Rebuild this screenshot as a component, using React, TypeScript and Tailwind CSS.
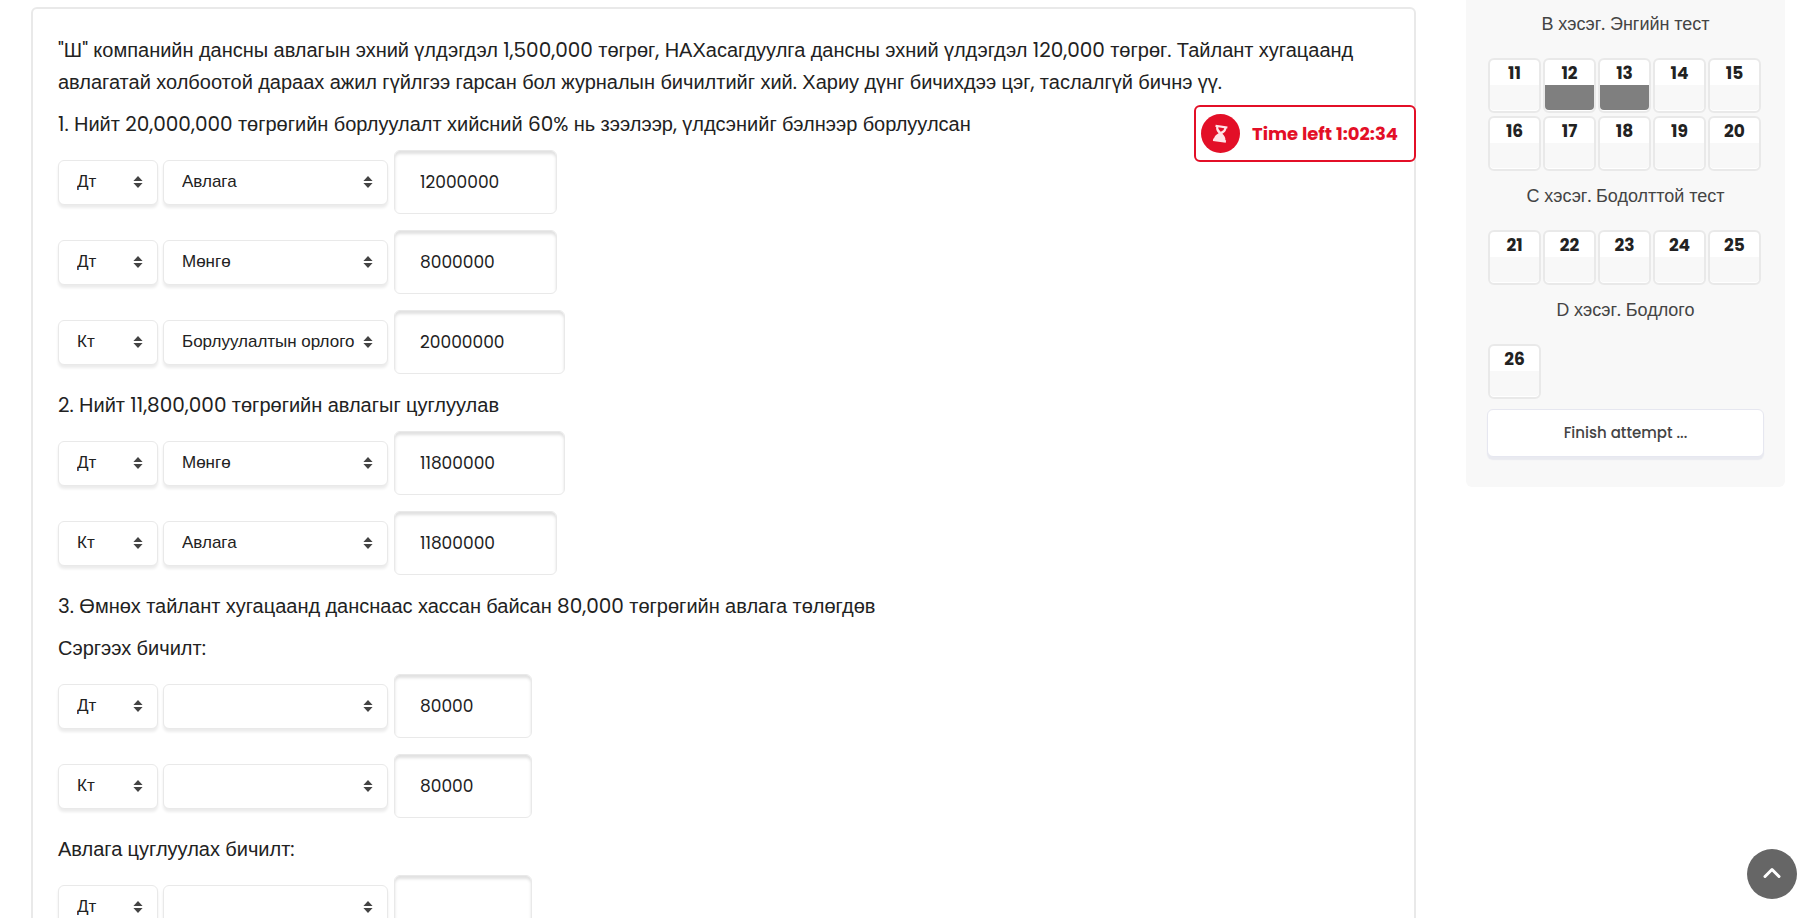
type Entry = { side: "Дт" | "Кт"; account: string; amount: string; width: string };
type Block = { paragraphs: string[]; entries: Entry[] };

const NARROW = "w-[138px]";
const MEDIUM = "w-[163px]";
const WIDE = "w-[171px]";

const accounts = ["", "Авлага", "Мөнгө", "Борлуулалтын орлого"];

const blocks: Block[] = [
  {
    paragraphs: [
      '"Ш" компанийн дансны авлагын эхний үлдэгдэл 1,500,000 төгрөг, НАХасагдуулга дансны эхний үлдэгдэл 120,000 төгрөг. Тайлант хугацаанд авлагатай холбоотой дараах ажил гүйлгээ гарсан бол журналын бичилтийг хий. Хариу дүнг бичихдээ цэг, таслалгүй бичнэ үү.',
      "1. Нийт 20,000,000 төгрөгийн борлуулалт хийсний 60% нь зээлээр, үлдсэнийг бэлнээр борлуулсан",
    ],
    entries: [
      { side: "Дт", account: "Авлага", amount: "12000000", width: MEDIUM },
      { side: "Дт", account: "Мөнгө", amount: "8000000", width: MEDIUM },
      { side: "Кт", account: "Борлуулалтын орлого", amount: "20000000", width: WIDE },
    ],
  },
  {
    paragraphs: ["2. Нийт 11,800,000 төгрөгийн авлагыг цуглуулав"],
    entries: [
      { side: "Дт", account: "Мөнгө", amount: "11800000", width: WIDE },
      { side: "Кт", account: "Авлага", amount: "11800000", width: MEDIUM },
    ],
  },
  {
    paragraphs: [
      "3. Өмнөх тайлант хугацаанд данснаас хассан байсан 80,000 төгрөгийн авлага төлөгдөв",
      "Сэргээх бичилт:",
    ],
    entries: [
      { side: "Дт", account: "", amount: "80000", width: NARROW },
      { side: "Кт", account: "", amount: "80000", width: NARROW },
    ],
  },
  {
    paragraphs: ["Авлага цуглуулах бичилт:"],
    entries: [
      { side: "Дт", account: "", amount: "", width: NARROW },
      { side: "Кт", account: "", amount: "", width: NARROW },
    ],
  },
];

const sections = [
  { title: "В хэсэг. Энгийн тест", questions: [11, 12, 13, 14, 15, 16, 17, 18, 19, 20] },
  { title: "С хэсэг. Бодолттой тест", questions: [21, 22, 23, 24, 25] },
  { title: "D хэсэг. Бодлого", questions: [26] },
];
const answered = [12, 13];

function Picker({ label, value, options, width }: { label: string; value: string; options: string[]; width: string }) {
  return (
    <div className={`relative ${width}`}>
      <select
        aria-label={label}
        defaultValue={value}
        className="block h-[45px] w-full appearance-none rounded-md border border-[#e9e9e9] bg-white pr-6 pl-[18px] text-[17px] text-[#222] shadow-[0_3px_3px_rgba(0,0,0,0.08)]"
      >
        {options.map((o) => (
          <option key={o} value={o}>
            {o}
          </option>
        ))}
      </select>
      <svg
        viewBox="0 0 10 12"
        className="pointer-events-none absolute top-4 right-[15px] h-3 w-2.5 fill-[#444]"
        aria-hidden="true"
      >
        <path d="M5 0 9.6 5H.4ZM5 12 .4 7h9.2Z" />
      </svg>
    </div>
  );
}

function EntryRow({ entry, index }: { entry: Entry; index: string }) {
  return (
    <div className="flex items-center">
      <Picker label={`Тал ${index}`} value={entry.side} options={["Дт", "Кт"]} width="w-[100px]" />
      <div className="ml-[5px]">
        <Picker label={`Данс ${index}`} value={entry.account} options={accounts} width="w-[225px]" />
      </div>
      <input
        type="text"
        aria-label={`Дүн ${index}`}
        defaultValue={entry.amount}
        className={`ml-1.5 h-16 rounded-md border border-[#e9e9e9] bg-white px-[25px] text-[17px] text-[#222] shadow-[inset_0_3px_3px_rgba(0,0,0,0.12)] ${entry.width}`}
      />
    </div>
  );
}

function Hourglass() {
  return (
    <svg viewBox="0 0 39 39" className="size-[39px] shrink-0" aria-hidden="true">
      <circle cx="19.5" cy="19.5" r="19.5" fill="#e30f27" />
      <g transform="rotate(8 19.5 19.5)">
        <path
          d="M13.5 11.500h12v2.200h-.8c0 2.800-1.400 4.300-3.300 5.800 1.900 1.400 3.600 2.900 3.900 5.900h.7V28h-13v-2.600h.7c.3-3 2-4.500 3.900-5.900-1.900-1.500-3.300-3-3.300-5.800h-.8Z"
          fill="#ffe3e6"
        />
        <path d="M16.500 13.700h6c0 1.600-1.200 2.800-3 4-1.800-1.200-3-2.400-3-4Z" fill="#e30f27" />
      </g>
    </svg>
  );
}

export default function App() {
  return (
    <div className="h-screen overflow-y-auto bg-white font-[Poppins,'Liberation_Sans',sans-serif] text-[#222] [scrollbar-width:none]">
      <div className="flex items-start pr-8 pl-[31px]">
        <main className="relative mt-[7px] min-w-0 flex-1 rounded-md border-2 border-[#e9e9e9] p-[25px]">
          {blocks.map((block, b) => (
            <section key={b} className="mb-[15px]">
              {block.paragraphs.map((p) => (
                <p key={p} className="mb-2.5 text-[20px] leading-8">
                  {p}
                </p>
              ))}
              <div className="flex flex-col gap-4">
                {block.entries.map((e, i) => (
                  <EntryRow key={i} entry={e} index={`${b + 1}.${i + 1}`} />
                ))}
              </div>
            </section>
          ))}
          <div
            role="timer"
            className="absolute top-24 -right-0.5 flex h-[57px] items-center gap-3 rounded-md border-2 border-[#e30f27] bg-white pr-4 pl-[5px] text-[18px] font-bold text-[#e30f27]"
          >
            <Hourglass />
            Time left 1:02:34
          </div>
        </main>

        <aside className="ml-[50px] w-[319px] shrink-0 rounded-b-md bg-[#f8f8f8] px-[21px] pt-[9px] pb-[30px]">
          <nav aria-label="Quiz navigation">
            {sections.map((s) => (
              <section key={s.title} className="pb-2.5">
                <h3 className="text-center text-[18px] leading-[30px] text-[#444]">{s.title}</h3>
                <div className="mt-[19px] flex flex-wrap gap-x-0.5 gap-y-[3px] pl-px">
                  {s.questions.map((q) => (
                    <a
                      key={q}
                      href={`#question-${q}`}
                      className="flex h-[55px] w-[53px] flex-col rounded-md border-2 border-[#e9e9e9] bg-white text-center text-[17px] leading-[27px] font-bold"
                    >
                      <span className="h-[25px]">{q}</span>
                      <span
                        className={
                          answered.includes(q) ? "h-[25px] rounded-b bg-[#7f7f7f]" : "h-[25px] rounded-b bg-[#f8f8f8]"
                        }
                      />
                    </a>
                  ))}
                </div>
              </section>
            ))}
          </nav>
          <button
            type="button"
            className="block h-12 w-full rounded-md border border-[#e6e7f0] bg-white text-[15px] font-medium text-[#444] shadow-[0_3px_1px_#e9eaf0]"
          >
            Finish attempt ...
          </button>
        </aside>
      </div>

      <button
        type="button"
        aria-label="Scroll to top"
        className="fixed right-5 bottom-[19px] flex size-[50px] items-center justify-center rounded-full bg-[#666] text-white"
      >
        <svg
          viewBox="0 0 18 12"
          className="mb-0.5 h-3 w-[18px]"
          fill="none"
          stroke="currentColor"
          strokeWidth="3"
          strokeLinecap="round"
          strokeLinejoin="round"
          aria-hidden="true"
        >
          <path d="m2 9.500 7-7 7 7" />
        </svg>
      </button>
    </div>
  );
}
